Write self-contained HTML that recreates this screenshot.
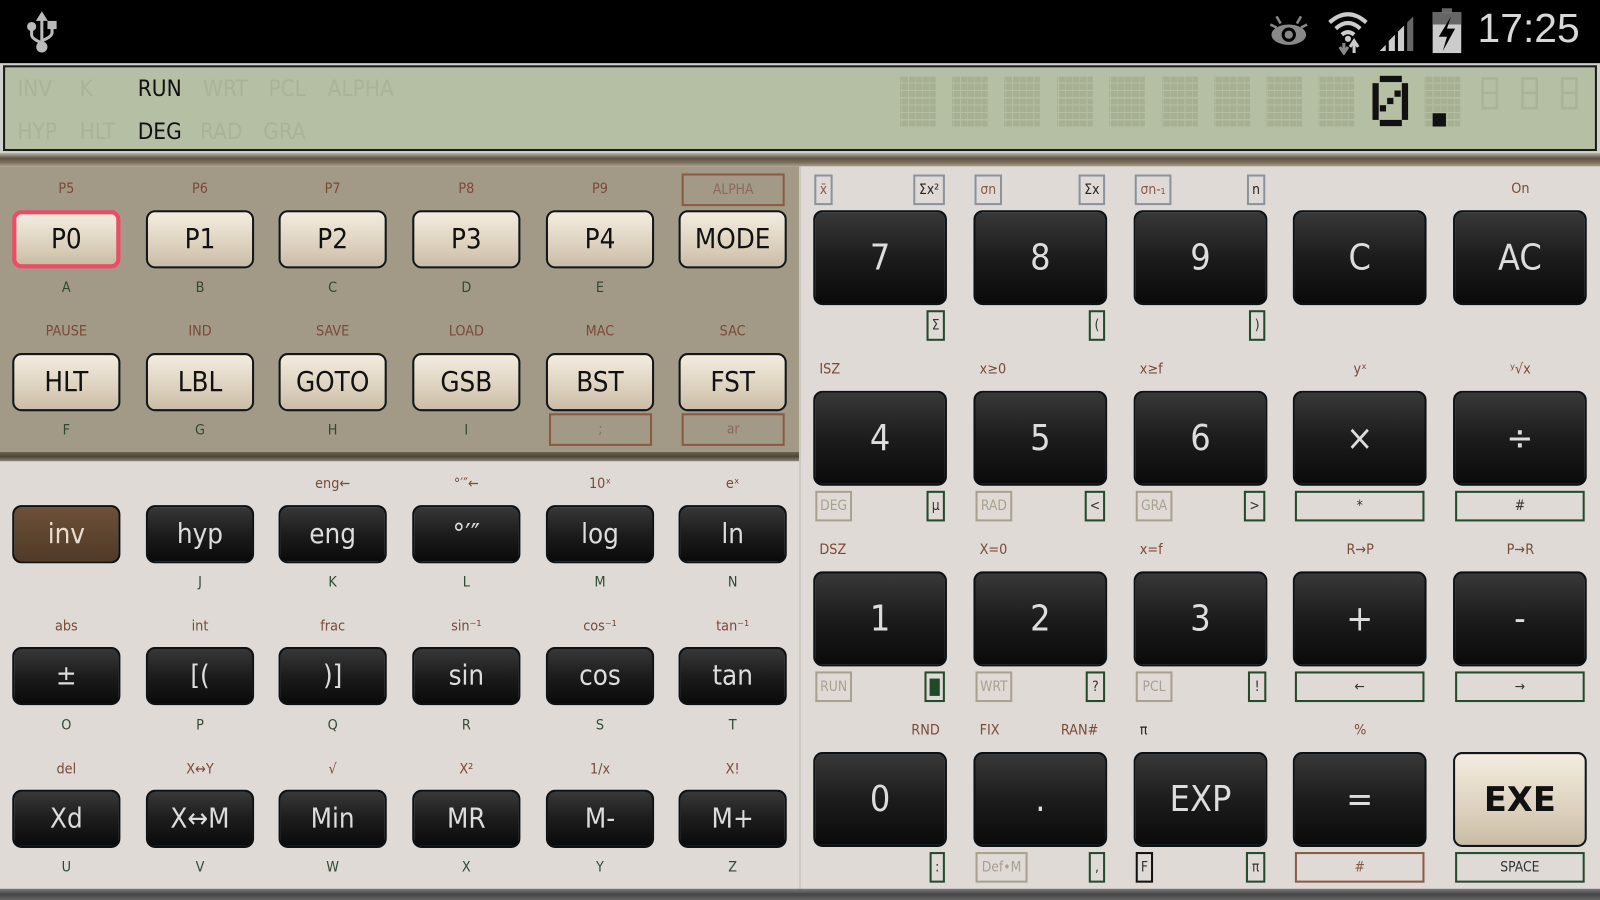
<!DOCTYPE html>
<html><head><meta charset="utf-8"><style>
*{margin:0;padding:0;box-sizing:border-box}
body{width:1600px;height:900px;overflow:hidden;background:#000;font-family:"DejaVu Sans Condensed","DejaVu Sans","Liberation Sans",sans-serif}
#w{position:absolute;left:0;top:0;width:1568px;height:882px;transform:scale(1.020408);transform-origin:0 0;background:#dfdad6}
.a{position:absolute}
.k{position:absolute;border-radius:9px;display:flex;align-items:center;justify-content:center;border:2px solid #10161c}
.lt{background:linear-gradient(#f3ecdf,#d9cdb9 70%,#c9bca6);color:#111;font-size:27px;width:106px;height:57px}
.dk{background:linear-gradient(#383838,#1c1c1c 50%,#0a0a0a);color:#ddd;width:106px;height:57px;font-size:27px;border-color:#0c1116}
.rk{width:131px;height:93px;font-size:35px}
.l{position:absolute;width:120px;text-align:center;font-size:14px;color:#7a4a38}
.g{color:#2f4a32}
.bx{position:absolute;border:2px solid #8b5a44;font-size:13.5px;color:#8b6a5a;display:flex;align-items:center;justify-content:center}
.gb{position:absolute;border:2px solid #234a2c;font-size:13.5px;color:#333;display:flex;align-items:center;justify-content:center;height:30px}
.yb{position:absolute;border:2px solid #aaa090;font-size:13.5px;color:#a8a090;display:flex;align-items:center;justify-content:center;height:30px}
.sb{position:absolute;border:2px solid #8a93a0;font-size:13.5px;color:#222;display:flex;align-items:center;justify-content:center;height:30px;top:171px}
.blk{position:absolute;top:74px;width:35px;height:50px;background-image:repeating-linear-gradient(90deg,transparent 0 1px,rgba(181,191,164,1) 1px 1.6px,transparent 1.6px 7px),repeating-linear-gradient(0deg,#a7b093 0 6px,#b5bfa4 6px 7.2px)}
.dl{position:absolute;font-size:22px;color:#a9b497}
</style></head><body><div id="w">
<div class="a" style="left:0;top:0;width:1568px;height:62px;background:#000"></div>
<svg class="a" style="left:26px;top:10px" width="30" height="44" viewBox="0 0 30 44"><g fill="#bbb" stroke="#bbb"><path d="M15 2 L10 10 H20 Z"/><line x1="15" y1="8" x2="15" y2="34" stroke-width="3"/><path d="M5 16 V24 Q5 28 15 32" fill="none" stroke-width="3"/><path d="M25 16 V22 Q25 26 15 30" fill="none" stroke-width="3"/><circle cx="5" cy="16" r="4"/><rect x="21" y="11" width="8" height="7"/><circle cx="15" cy="36" r="5"/></g></svg>
<svg class="a" style="left:1243px;top:14px" width="40" height="34" viewBox="0 0 40 34"><g stroke="#888" stroke-width="2.5"><line x1="8" y1="2" x2="12" y2="9"/><line x1="32" y1="2" x2="28" y2="9"/><line x1="2" y1="10" x2="8" y2="13"/><line x1="38" y1="10" x2="32" y2="13"/></g><ellipse cx="20" cy="20" rx="17" ry="10" fill="#888"/><circle cx="20" cy="20" r="7" fill="#000"/><circle cx="20" cy="20" r="4" fill="#888"/></svg>
<svg class="a" style="left:1300px;top:6px" width="44" height="48" viewBox="0 0 44 48"><g fill="none" stroke="#ccc" stroke-width="4"><path d="M3 16 Q21 0 39 16"/><path d="M9 22 Q21 11 33 22"/><path d="M15 28 Q21 23 27 28"/></g><circle cx="21" cy="32" r="3" fill="#ccc"/><path d="M17 36 V44 M13 40 L17 46 L21 40" stroke="#888" stroke-width="3" fill="none"/><path d="M27 46 V36 M23 40 L27 34 L31 40" stroke="#ccc" stroke-width="3" fill="none"/></svg>
<svg class="a" style="left:1350px;top:10px" width="42" height="42" viewBox="0 0 42 42"><path d="M2 40 L8 34 V40Z M11 40 V30 L17 24 V40Z" fill="#ccc"/><path d="M20 40 V21 L26 15 V40Z" fill="#ccc"/><path d="M29 40 V12 L35 6 V40Z" fill="#666"/></svg>
<svg class="a" style="left:1402px;top:8px" width="32" height="46" viewBox="0 0 32 46"><rect x="11" y="0" width="10" height="5" fill="#666"/><rect x="2" y="4" width="28" height="40" fill="#ccc"/><rect x="2" y="4" width="28" height="12" fill="#666"/><path d="M20 8 L8 28 H16 L12 42 L24 20 H16 Z" fill="#000"/></svg>
<div class="a" style="left:1448px;top:6px;font-family:'Liberation Sans',sans-serif;font-size:40px;color:#d8d8d8">17:25</div>
<div class="a" style="left:0;top:62px;width:1568px;height:90px;background:#cfd1cc"></div>
<div class="a" style="left:3px;top:64px;width:1562px;height:84px;background:#b5bfa4;border:2px solid #1a1a1a"></div>
<div class="dl" style="left:17px;top:75px">INV</div><div class="dl" style="left:78px;top:75px">K</div>
<div class="dl" style="left:135px;top:75px;color:#111">RUN</div><div class="dl" style="left:199px;top:75px">WRT</div><div class="dl" style="left:263px;top:75px">PCL</div><div class="dl" style="left:321px;top:75px">ALPHA</div>
<div class="dl" style="left:17px;top:117px">HYP</div><div class="dl" style="left:78px;top:117px">HLT</div>
<div class="dl" style="left:135px;top:117px;color:#111">DEG</div><div class="dl" style="left:196px;top:117px">RAD</div><div class="dl" style="left:258px;top:117px">GRA</div>
<div class="blk" style="left:882px"></div><div class="blk" style="left:933px"></div><div class="blk" style="left:984px"></div><div class="blk" style="left:1036px"></div><div class="blk" style="left:1087px"></div><div class="blk" style="left:1139px"></div><div class="blk" style="left:1190px"></div><div class="blk" style="left:1241px"></div><div class="blk" style="left:1292px"></div><div class="blk" style="left:1396px"></div>
<svg class="a" style="left:1345px;top:74px" width="36" height="51" viewBox="0 0 5 7"><g fill="#111"><rect x="1" y="0" width="3" height=".85"/><rect x="0" y="1" width=".85" height="5"/><rect x="4" y="1" width=".85" height="5"/><rect x="1" y="6" width="3" height=".85"/><rect x="3" y="2" width=".85" height=".85"/><rect x="2" y="3" width=".85" height=".85"/><rect x="1" y="4" width=".85" height=".85"/></g></svg>
<div class="a" style="left:1404px;top:111px;width:13px;height:13px;background:#111"></div>
<svg class="a" style="left:1450px;top:74px" width="100" height="36" viewBox="0 0 100 36"><g fill="none" stroke="#a9b497" stroke-width="2.5"><rect x="3" y="3" width="14" height="29"/><line x1="3" y1="17" x2="17" y2="17"/><rect x="42" y="3" width="14" height="29"/><line x1="42" y1="17" x2="56" y2="17"/><rect x="81" y="3" width="14" height="29"/><line x1="81" y1="17" x2="95" y2="17"/></g></svg>
<div class="a" style="left:0;top:150px;width:1568px;height:13px;background:linear-gradient(#b8b0a0,#5e5446 40%,#7a6e5a 70%,#a89e8a)"></div>
<div class="a" style="left:0;top:163px;width:785px;height:282px;background:#a29986"></div>
<div class="a" style="left:0;top:443px;width:785px;height:9px;background:linear-gradient(#6a604e,#4e4638 50%,#8e8677)"></div>
<div class="a" style="left:783px;top:163px;width:2px;height:710px;background:#cfc9c2"></div>
<div class="l" style="left:5px;top:177px">P5</div><div class="l" style="left:136px;top:177px">P6</div><div class="l" style="left:266px;top:177px">P7</div><div class="l" style="left:397px;top:177px">P8</div><div class="l" style="left:528px;top:177px">P9</div>
<div class="bx" style="left:668px;top:170px;width:101px;height:32px">ALPHA</div>
<div class="k lt" style="left:12px;top:206px;border:4px solid #f04a66">P0</div><div class="k lt" style="left:143px;top:206px">P1</div><div class="k lt" style="left:273px;top:206px">P2</div><div class="k lt" style="left:404px;top:206px">P3</div><div class="k lt" style="left:535px;top:206px">P4</div><div class="k lt" style="left:665px;top:206px">MODE</div>
<div class="l g" style="left:5px;top:274px">A</div><div class="l g" style="left:136px;top:274px">B</div><div class="l g" style="left:266px;top:274px">C</div><div class="l g" style="left:397px;top:274px">D</div><div class="l g" style="left:528px;top:274px">E</div>
<div class="l" style="left:5px;top:317px">PAUSE</div><div class="l" style="left:136px;top:317px">IND</div><div class="l" style="left:266px;top:317px">SAVE</div><div class="l" style="left:397px;top:317px">LOAD</div><div class="l" style="left:528px;top:317px">MAC</div><div class="l" style="left:658px;top:317px">SAC</div>
<div class="k lt" style="left:12px;top:346px">HLT</div><div class="k lt" style="left:143px;top:346px">LBL</div><div class="k lt" style="left:273px;top:346px">GOTO</div><div class="k lt" style="left:404px;top:346px">GSB</div><div class="k lt" style="left:535px;top:346px">BST</div><div class="k lt" style="left:665px;top:346px">FST</div>
<div class="l g" style="left:5px;top:414px">F</div><div class="l g" style="left:136px;top:414px">G</div><div class="l g" style="left:266px;top:414px">H</div><div class="l g" style="left:397px;top:414px">I</div>
<div class="bx" style="left:538px;top:405px;width:101px;height:32px">;</div><div class="bx" style="left:668px;top:405px;width:101px;height:32px">ar</div>
<div class="l" style="left:266px;top:466px">eng←</div><div class="l" style="left:397px;top:466px">°′″←</div><div class="l" style="left:528px;top:466px">10ˣ</div><div class="l" style="left:658px;top:466px">eˣ</div>
<div class="k dk" style="left:12px;top:495px;background:linear-gradient(#6e5038,#503a28);color:#e8ddd0">inv</div><div class="k dk" style="left:143px;top:495px">hyp</div><div class="k dk" style="left:273px;top:495px">eng</div><div class="k dk" style="left:404px;top:495px">°′″</div><div class="k dk" style="left:535px;top:495px">log</div><div class="k dk" style="left:665px;top:495px">ln</div>
<div class="l g" style="left:136px;top:563px">J</div><div class="l g" style="left:266px;top:563px">K</div><div class="l g" style="left:397px;top:563px">L</div><div class="l g" style="left:528px;top:563px">M</div><div class="l g" style="left:658px;top:563px">N</div>
<div class="l" style="left:5px;top:606px">abs</div><div class="l" style="left:136px;top:606px">int</div><div class="l" style="left:266px;top:606px">frac</div><div class="l" style="left:397px;top:606px">sin⁻¹</div><div class="l" style="left:528px;top:606px">cos⁻¹</div><div class="l" style="left:658px;top:606px">tan⁻¹</div>
<div class="k dk" style="left:12px;top:634px">±</div><div class="k dk" style="left:143px;top:634px">[(</div><div class="k dk" style="left:273px;top:634px">)]</div><div class="k dk" style="left:404px;top:634px">sin</div><div class="k dk" style="left:535px;top:634px">cos</div><div class="k dk" style="left:665px;top:634px">tan</div>
<div class="l g" style="left:5px;top:703px">O</div><div class="l g" style="left:136px;top:703px">P</div><div class="l g" style="left:266px;top:703px">Q</div><div class="l g" style="left:397px;top:703px">R</div><div class="l g" style="left:528px;top:703px">S</div><div class="l g" style="left:658px;top:703px">T</div>
<div class="l" style="left:5px;top:746px">del</div><div class="l" style="left:136px;top:746px">X↔Y</div><div class="l" style="left:266px;top:746px">√</div><div class="l" style="left:397px;top:746px">X²</div><div class="l" style="left:528px;top:746px">1/x</div><div class="l" style="left:658px;top:746px">X!</div>
<div class="k dk" style="left:12px;top:774px">Xd</div><div class="k dk" style="left:143px;top:774px">X↔M</div><div class="k dk" style="left:273px;top:774px">Min</div><div class="k dk" style="left:404px;top:774px">MR</div><div class="k dk" style="left:535px;top:774px">M-</div><div class="k dk" style="left:665px;top:774px">M+</div>
<div class="l g" style="left:5px;top:842px">U</div><div class="l g" style="left:136px;top:842px">V</div><div class="l g" style="left:266px;top:842px">W</div><div class="l g" style="left:397px;top:842px">X</div><div class="l g" style="left:528px;top:842px">Y</div><div class="l g" style="left:658px;top:842px">Z</div>
<div class="sb" style="left:798px;width:18px;color:#8b5a44">x̄</div><div class="sb" style="left:895px;width:31px">Σx²</div>
<div class="sb" style="left:955px;width:27px;color:#8b5a44">σn</div><div class="sb" style="left:1057px;width:26px">Σx</div>
<div class="sb" style="left:1112px;width:36px;color:#8b5a44">σn-₁</div><div class="sb" style="left:1222px;width:18px">n</div>
<div class="l" style="left:1430px;top:177px">On</div>
<div class="k dk rk" style="left:797px;top:206px">7</div><div class="k dk rk" style="left:954px;top:206px">8</div><div class="k dk rk" style="left:1111px;top:206px">9</div><div class="k dk rk" style="left:1267px;top:206px">C</div><div class="k dk rk" style="left:1424px;top:206px">AC</div>
<div class="gb" style="left:908px;top:304px;width:18px">Σ</div><div class="gb" style="left:1067px;top:304px;width:16px">(</div><div class="gb" style="left:1224px;top:304px;width:16px">)</div>
<div class="l" style="left:803px;top:354px;width:auto">ISZ</div><div class="l" style="left:960px;top:354px;width:auto">x≥0</div><div class="l" style="left:1117px;top:354px;width:auto">x≥f</div><div class="l" style="left:1273px;top:354px">yˣ</div><div class="l" style="left:1430px;top:354px">ʸ√x</div>
<div class="k dk rk" style="left:797px;top:383px">4</div><div class="k dk rk" style="left:954px;top:383px">5</div><div class="k dk rk" style="left:1111px;top:383px">6</div><div class="k dk rk" style="left:1267px;top:383px">×</div><div class="k dk rk" style="left:1424px;top:383px">÷</div>
<div class="yb" style="left:799px;top:481px;width:36px">DEG</div><div class="gb" style="left:908px;top:481px;width:18px">μ</div>
<div class="yb" style="left:956px;top:481px;width:36px">RAD</div><div class="gb" style="left:1063px;top:481px;width:20px">&lt;</div>
<div class="yb" style="left:1113px;top:481px;width:36px">GRA</div><div class="gb" style="left:1219px;top:481px;width:21px">&gt;</div>
<div class="gb" style="left:1269px;top:481px;width:127px">*</div><div class="gb" style="left:1426px;top:481px;width:127px">#</div>
<div class="l" style="left:803px;top:531px;width:auto">DSZ</div><div class="l" style="left:960px;top:531px;width:auto">X=0</div><div class="l" style="left:1117px;top:531px;width:auto">x=f</div><div class="l" style="left:1273px;top:531px">R→P</div><div class="l" style="left:1430px;top:531px">P→R</div>
<div class="k dk rk" style="left:797px;top:560px">1</div><div class="k dk rk" style="left:954px;top:560px">2</div><div class="k dk rk" style="left:1111px;top:560px">3</div><div class="k dk rk" style="left:1267px;top:560px">+</div><div class="k dk rk" style="left:1424px;top:560px">-</div>
<div class="yb" style="left:799px;top:658px;width:36px">RUN</div><div class="gb" style="left:906px;top:658px;width:20px"><span style="display:block;width:10px;height:17px;background:#1e4a2a"></span></div>
<div class="yb" style="left:956px;top:658px;width:36px">WRT</div><div class="gb" style="left:1064px;top:658px;width:19px">?</div>
<div class="yb" style="left:1113px;top:658px;width:36px">PCL</div><div class="gb" style="left:1223px;top:658px;width:18px">!</div>
<div class="gb" style="left:1269px;top:658px;width:127px">←</div><div class="gb" style="left:1426px;top:658px;width:127px">→</div>
<div class="l" style="left:847px;top:708px">RND</div><div class="l" style="left:960px;top:708px;width:auto">FIX</div><div class="l" style="left:998px;top:708px">RAN#</div><div class="l" style="left:1117px;top:708px;width:auto;color:#222">π</div><div class="l" style="left:1273px;top:708px">%</div>
<div class="k dk rk" style="left:797px;top:737px">0</div><div class="k dk rk" style="left:954px;top:737px">.</div><div class="k dk rk" style="left:1111px;top:737px">EXP</div><div class="k dk rk" style="left:1267px;top:737px">=</div>
<div class="k lt rk" style="left:1424px;top:737px;font-size:33px;font-weight:bold;font-family:'DejaVu Sans',sans-serif">EXE</div>
<div class="gb" style="left:911px;top:835px;width:15px">:</div>
<div class="yb" style="left:956px;top:835px;width:51px">Def•M</div><div class="gb" style="left:1067px;top:835px;width:16px">,</div>
<div class="gb" style="left:1113px;top:835px;width:17px;border-color:#111">F</div><div class="gb" style="left:1221px;top:835px;width:19px">π</div>
<div class="gb" style="left:1269px;top:835px;width:127px;border-color:#8b5a44;color:#8b5a44">#</div><div class="gb" style="left:1426px;top:835px;width:127px">SPACE</div>
<div class="a" style="left:0;top:871px;width:1568px;height:11px;background:linear-gradient(#7a7a7a,#444 50%,#666)"></div>
</div></body></html>
